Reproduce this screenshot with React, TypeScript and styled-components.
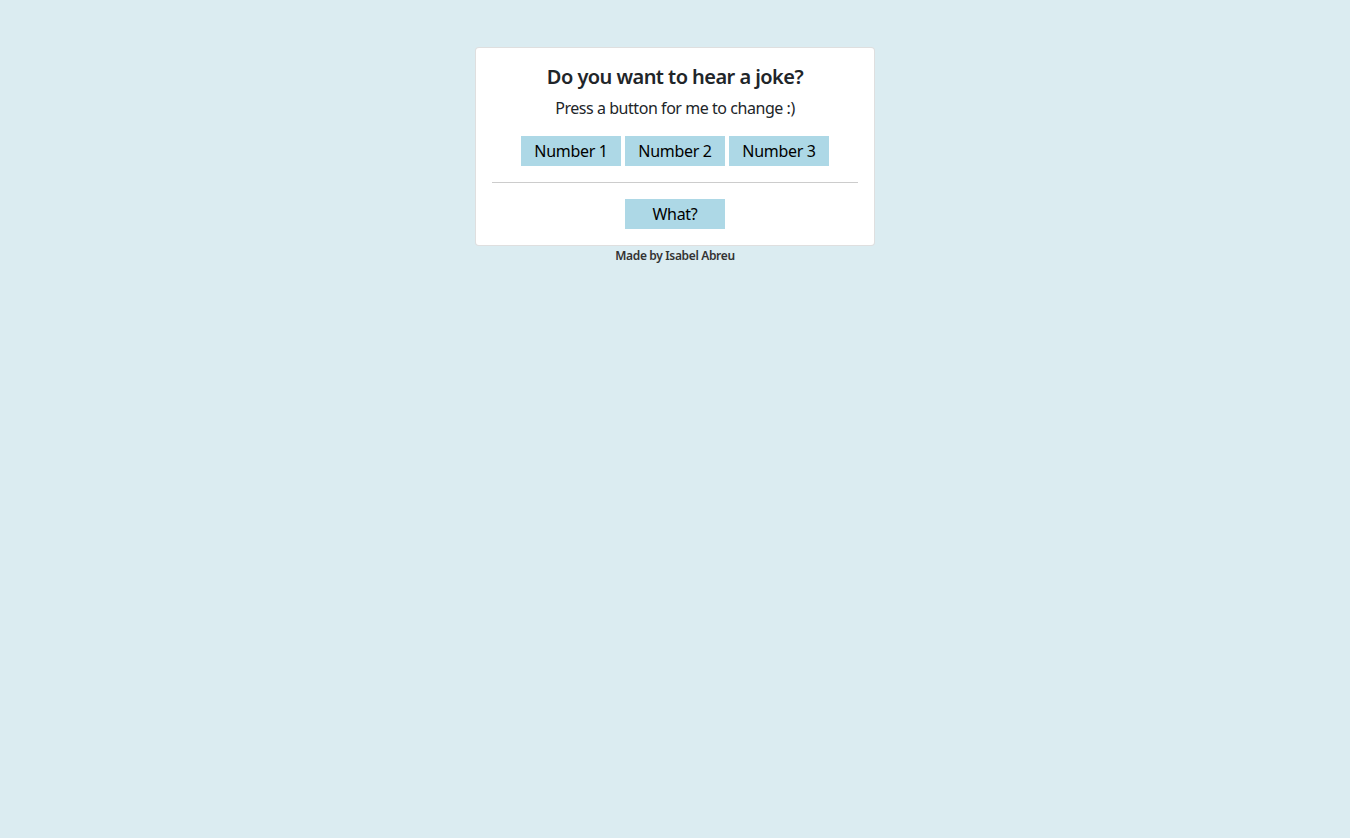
import React from 'react';
import styled, { createGlobalStyle } from 'styled-components';

const GlobalStyle = createGlobalStyle`
  body {
    margin: 0;
    background: #dbecf1;
    font-family: "Segoe UI", "Noto Sans", "Liberation Sans", sans-serif;
    color: #212529;
  }
`;

const Page = styled.div`
  display: flex;
  flex-direction: column;
  align-items: center;
  padding-top: 47px;
`;

const Card = styled.div`
  width: 400px;
  box-sizing: border-box;
  background: #fff;
  border: 1px solid rgba(0, 0, 0, 0.125);
  border-radius: 4px;
  padding: 16px;
  text-align: center;
`;

const Title = styled.h5`
  margin: 0 0 8px;
  padding-top: 1px;
  height: 23px;
  font-size: 20px;
  font-weight: 600;
  line-height: 24px;
  letter-spacing: -0.55px;
`;

const Subtitle = styled.p`
  margin: 0 0 16px;
  font-size: 16px;
  line-height: 24px;
  letter-spacing: -0.45px;
`;

const ButtonRow = styled.div`
  display: flex;
  justify-content: center;
  gap: 4px;
`;

const JokeButton = styled.button`
  width: 100px;
  height: 30px;
  border: none;
  padding: 0;
  background: lightblue;
  color: #000;
  font-family: inherit;
  font-size: 16px;
  letter-spacing: -0.3px;
  cursor: pointer;
`;

const Divider = styled.hr`
  margin: 16px 0;
  border: 0;
  border-top: 1px solid rgba(0, 0, 0, 0.2);
`;

const Footer = styled.div`
  margin-top: 1px;
  font-size: 12px;
  font-weight: 600;
  letter-spacing: -0.35px;
  color: #333;
`;

const App = () => {
  return (
    <>
      <GlobalStyle />
      <Page>
        <Card>
          <Title>Do you want to hear a joke?</Title>
          <Subtitle>Press a button for me to change :)</Subtitle>
          <ButtonRow>
            <JokeButton>Number 1</JokeButton>
            <JokeButton>Number 2</JokeButton>
            <JokeButton>Number 3</JokeButton>
          </ButtonRow>
          <Divider />
          <ButtonRow>
            <JokeButton>What?</JokeButton>
          </ButtonRow>
        </Card>
        <Footer>Made by Isabel Abreu</Footer>
      </Page>
    </>
  );
};

export default App;
